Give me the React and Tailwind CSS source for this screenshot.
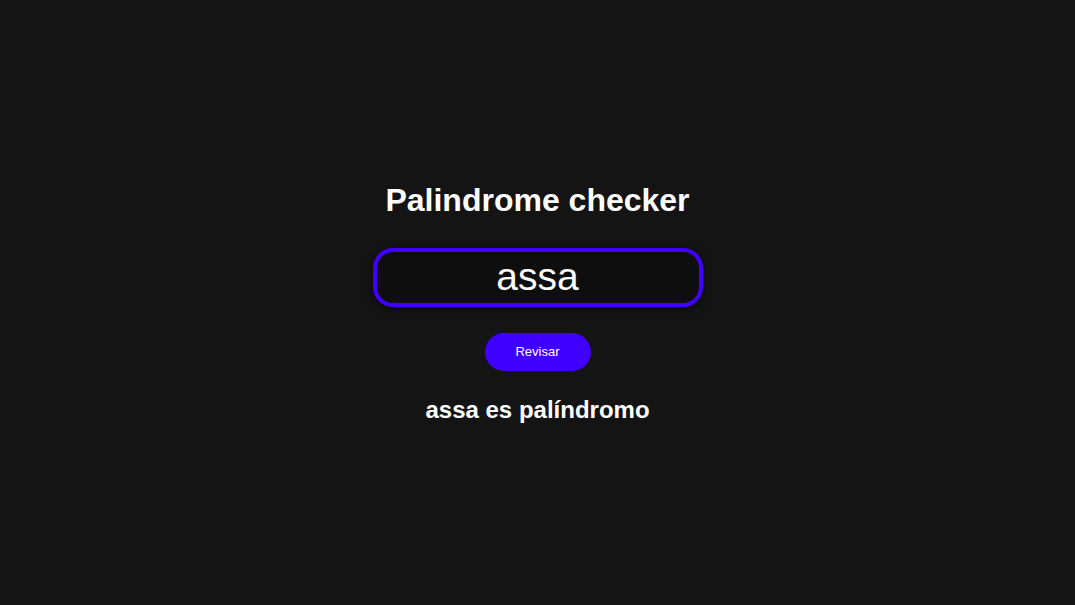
import { useState } from 'react';

export default function App() {
  const [text, setText] = useState('assa');
  const [result, setResult] = useState('assa es palíndromo');

  const check = () => {
    const clean = text.toLowerCase().replace(/[^a-z0-9áéíóúñ]/g, '');
    const isPal = clean === clean.split('').reverse().join('');
    setResult(`${text} ${isPal ? 'es' : 'no es'} palíndromo`);
  };

  return (
    <div className="flex min-h-screen flex-col items-center justify-center bg-[#141414] font-['Liberation_Sans',Arial,sans-serif] text-white">
      <h1 className="text-[32px] font-bold leading-[37px]">Palindrome checker</h1>
      <input
        value={text}
        onChange={(e) => setText(e.target.value)}
        className="mt-[29px] h-[59px] w-[330px] rounded-[20px] border-4 border-[#3f00ff] bg-[#0e0e0e] text-center text-[39px] text-white shadow-[0_2px_8px_rgba(0,0,0,0.6)] outline-none"
      />
      <button
        onClick={check}
        className="mt-[26px] h-[38px] w-[106px] rounded-full bg-[#3f00ff] text-[13px] text-white"
      >
        Revisar
      </button>
      <h2 className="mt-[25px] text-[24px] font-bold leading-[28px]">{result}</h2>
    </div>
  );
}
